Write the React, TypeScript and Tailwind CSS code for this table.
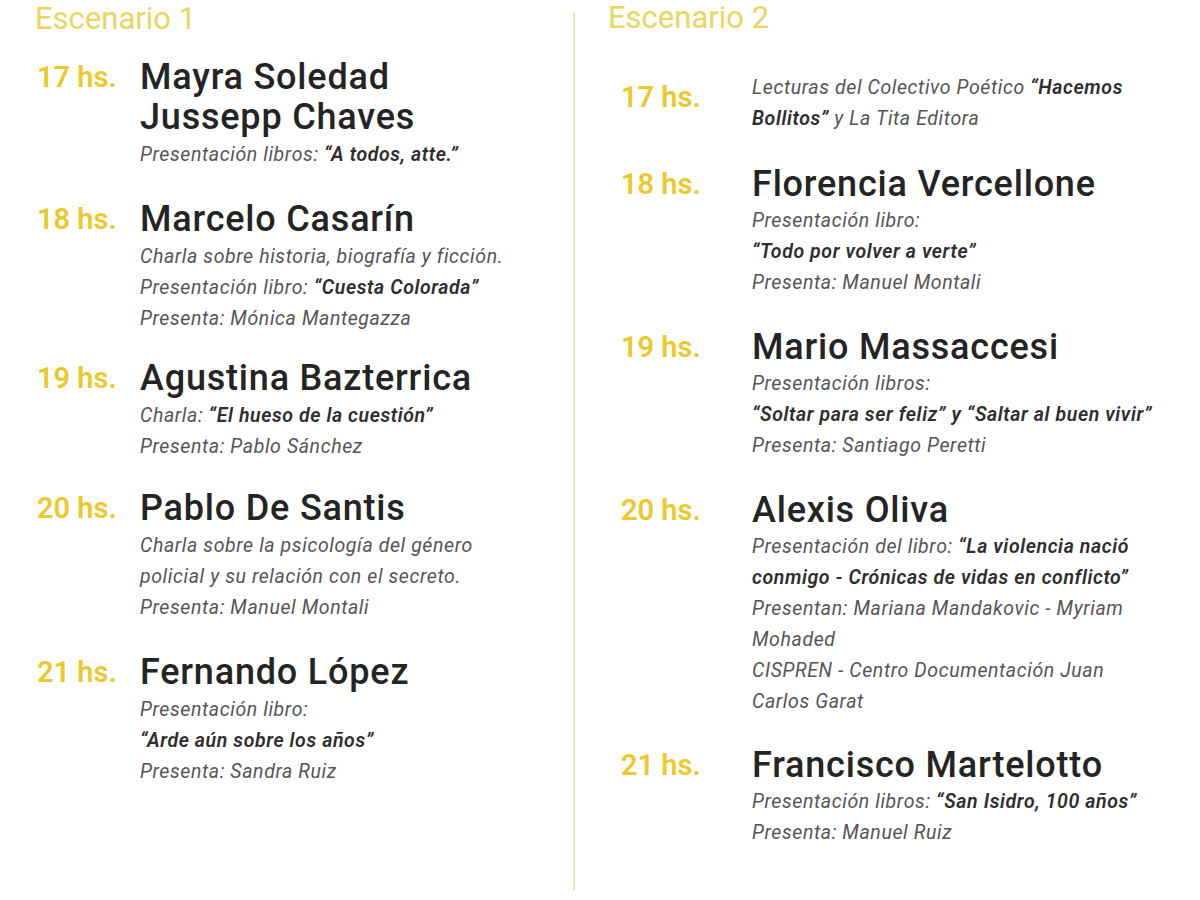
import React from "react";

type Entry = {
  time: string;
  name?: string[];
  details: React.ReactNode[];
  timeOffset?: string;
  mt?: string;
};

const B = ({ children }: { children: React.ReactNode }) => (
  <span className="font-semibold text-[#2e2e2e]">{children}</span>
);

const left: Entry[] = [
  {
    time: "17 hs.",
    name: ["Mayra Soledad", "Jussepp Chaves"],
    details: [<>Presentación libros: <B>“A todos, atte.”</B></>],
    mt: "mt-0",
  },
  {
    time: "18 hs.",
    name: ["Marcelo Casarín"],
    details: [
      <>Charla sobre historia, biografía y ficción.</>,
      <>Presentación libro: <B>“Cuesta Colorada”</B></>,
      <>Presenta: Mónica Mantegazza</>,
    ],
    mt: "mt-[29px]",
  },
  {
    time: "19 hs.",
    name: ["Agustina Bazterrica"],
    details: [
      <>Charla: <B>“El hueso de la cuestión”</B></>,
      <>Presenta: Pablo Sánchez</>,
    ],
    mt: "mt-[24px]",
  },
  {
    time: "20 hs.",
    name: ["Pablo De Santis"],
    details: [
      <>Charla sobre la psicología del género</>,
      <>policial y su relación con el secreto.</>,
      <>Presenta: Manuel Montali</>,
    ],
    mt: "mt-[26px]",
  },
  {
    time: "21 hs.",
    name: ["Fernando López"],
    details: [
      <>Presentación libro:</>,
      <B>“Arde aún sobre los años”</B>,
      <>Presenta: Sandra Ruiz</>,
    ],
    mt: "mt-[29px]",
  },
];

const right: Entry[] = [
  {
    time: "17 hs.",
    details: [
      <>Lecturas del Colectivo Poético <B>“Hacemos</B></>,
      <><B>Bollitos”</B> y La Tita Editora</>,
    ],
    timeOffset: "mt-[5px]",
    mt: "mt-0",
  },
  {
    time: "18 hs.",
    name: ["Florencia Vercellone"],
    details: [
      <>Presentación libro:</>,
      <B>“Todo por volver a verte”</B>,
      <>Presenta: Manuel Montali</>,
    ],
    mt: "mt-[30px]",
  },
  {
    time: "19 hs.",
    name: ["Mario Massaccesi"],
    details: [
      <>Presentación libros:</>,
      <B>“Soltar para ser feliz” y “Saltar al buen vivir”</B>,
      <>Presenta: Santiago Peretti</>,
    ],
    mt: "mt-[29px]",
  },
  {
    time: "20 hs.",
    name: ["Alexis Oliva"],
    details: [
      <>Presentación del libro: <B>“La violencia nació</B></>,
      <B>conmigo - Crónicas de vidas en conflicto”</B>,
      <>Presentan: Mariana Mandakovic - Myriam</>,
      <>Mohaded</>,
      <>CISPREN - Centro Documentación Juan</>,
      <>Carlos Garat</>,
    ],
    mt: "mt-[29px]",
  },
  {
    time: "21 hs.",
    name: ["Francisco Martelotto"],
    details: [
      <>Presentación libros: <B>“San Isidro, 100 años”</B></>,
      <>Presenta: Manuel Ruiz</>,
    ],
    mt: "mt-[28px]",
  },
];

function Row({ e, timeW, detailMt }: { e: Entry; timeW: string; detailMt: string }) {
  return (
    <div className={`flex ${e.mt ?? ""}`}>
      <div
        className={`${timeW} shrink-0 text-[29px] leading-[40px] font-semibold text-[#ebc92c] ${
          e.timeOffset ?? ""
        }`}
      >
        {e.time}
      </div>
      <div className="flex flex-col">
        {e.name && (
          <div className="text-[36px] leading-[40px] font-medium text-[#242424] tracking-[0.8px]">
            {e.name.map((n, i) => (
              <div key={i}>{n}</div>
            ))}
          </div>
        )}
        <div
          className={`flex flex-col text-[19.5px] leading-[31px] italic text-[#555555] tracking-[0.6px] ${
            e.name ? detailMt : ""
          }`}
        >
          {e.details.map((d, i) => (
            <div key={i} className="whitespace-nowrap">
              {d}
            </div>
          ))}
        </div>
      </div>
    </div>
  );
}

export default function App() {
  return (
    <div
      className="w-[1200px] h-[900px] bg-white flex overflow-hidden"
      style={{ fontFamily: "Roboto, 'Noto Sans', sans-serif" }}
    >
      <div className="w-[573px] shrink-0 pl-[35px] flex flex-col">
        <div className="text-[31px] leading-[36px] text-[#e8d65e] pt-[1px]">
          Escenario 1
        </div>
        <div className="flex flex-col pl-[2px] mt-[20px]">
          {left.map((e, i) => (
            <Row key={i} e={e} timeW="w-[103px]" detailMt="mt-[2px]" />
          ))}
        </div>
      </div>
      <div className="w-[2px] bg-[#ece7b8] mt-[12px] mb-[10px]" />
      <div className="flex-1 pl-[33px] flex flex-col">
        <div className="text-[31px] leading-[36px] text-[#e8d65e]">
          Escenario 2
        </div>
        <div className="flex flex-col pl-[13px] mt-[36px]">
          {right.map((e, i) => (
            <Row key={i} e={e} timeW="w-[131px]" detailMt="mt-[1px]" />
          ))}
        </div>
      </div>
    </div>
  );
}
